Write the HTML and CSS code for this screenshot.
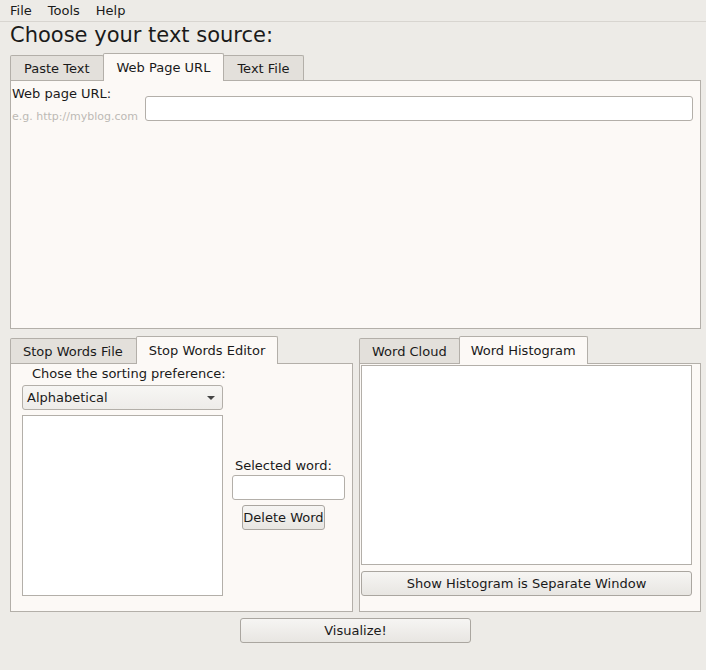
FILE: index.html
```html
<!DOCTYPE html>
<html>
<head>
<meta charset="utf-8">
<link rel="stylesheet" href="styles.css">
</head>
<body>
<div class="menubar">
  <span class="menu">File</span>
  <span class="menu">Tools</span>
  <span class="menu">Help</span>
</div>
<div class="main">
  <h1 class="title">Choose your text source:</h1>

  <div class="notebook top-nb">
    <div class="tabs">
      <div class="tab wide">Paste Text</div>
      <div class="tab wide active">Web Page URL</div>
      <div class="tab wide">Text File</div>
    </div>
    <div class="pane url-pane">
      <div class="url-labels">
        <div class="lbl">Web page URL:</div>
        <div class="hint">e.g. http://myblog.com</div>
      </div>
      <div class="entry url-entry"></div>
    </div>
  </div>

  <div class="lower">
    <div class="notebook left-nb">
      <div class="tabs">
        <div class="tab plus1">Stop Words File</div>
        <div class="tab active">Stop Words Editor</div>
      </div>
      <div class="pane editor-pane">
        <div class="col-left">
          <div class="lbl sort-lbl">Chose the sorting preference:</div>
          <div class="combo"><span>Alphabetical</span><span class="arrow"></span></div>
          <div class="listbox"></div>
        </div>
        <div class="col-right">
          <div class="lbl sel-lbl">Selected word:</div>
          <div class="entry sel-entry"></div>
          <div class="button del-btn">Delete Word</div>
        </div>
      </div>
    </div>
    <div class="notebook right-nb">
      <div class="tabs">
        <div class="tab">Word Cloud</div>
        <div class="tab narrow active">Word Histogram</div>
      </div>
      <div class="pane hist-pane">
        <div class="canvas"></div>
        <div class="button hist-btn">Show Histogram is Separate Window</div>
      </div>
    </div>
  </div>

  <div class="bottom">
    <div class="button vis-btn">Visualize!</div>
  </div>
</div>
</body>
</html>
```

FILE: styles.css
```css
* { box-sizing: border-box; }
html, body {
  margin: 0;
  padding: 0;
  background: #edebe7;
  font-family: "DejaVu Sans", sans-serif;
  font-size: 13px;
  color: #1a1a1a;
  width: 706px;
  height: 670px;
  overflow: hidden;
}
.menubar {
  height: 22px;
  display: flex;
  align-items: center;
  gap: 16px;
  padding-left: 10px;
  border-bottom: 1px solid #d8d5d0;
  background: #edebe7;
}
.menu { line-height: 20px; }
.main {
  padding: 0 5px 0 10px;
}
.title {
  margin: 0;
  font-weight: normal;
  font-size: 21px;
  line-height: 26px;
  height: 31px;
}
.notebook { display: flex; flex-direction: column; }
.tabs {
  display: flex;
  align-items: flex-end;
  height: 27px;
  position: relative;
  z-index: 1;
}
.tab {
  height: 25px;
  line-height: 25px;
  padding: 0 12px;
  background: #e3e0db;
  border: 1px solid #b3afa9;
  border-bottom: none;
  border-radius: 2px 2px 0 0;
  margin-right: -1px;
  white-space: nowrap;
}
.tab.wide { padding: 0 13px; }
.tab.plus1 { padding: 0 13px 0 12px; }
.tab.narrow { padding: 0 11px; }
.tab.active {
  height: 28px;
  line-height: 27px;
  background: #fcf9f6;
  margin-bottom: -1px;
  position: relative;
}
.pane {
  background: #fcf9f6;
  border: 1px solid #b3afa9;
}
.url-pane {
  height: 249px;
  display: flex;
  align-items: flex-start;
  padding: 4px 7px 0 1px;
}
.url-labels { width: 133px; }
.lbl { line-height: 17px; white-space: nowrap; }
.hint {
  font-size: 11px;
  color: #bdbab5;
  margin-top: 8px;
  line-height: 14px;
}
.entry {
  background: #ffffff;
  border: 1px solid #b3afa9;
  border-radius: 3px;
  height: 25px;
}
.url-entry {
  flex: 1;
  margin-top: 11px;
}
.lower {
  display: flex;
  gap: 6px;
  margin-top: 7px;
}
.left-nb { width: 343px; }
.right-nb { width: 342px; }
.editor-pane {
  height: 249px;
  display: flex;
  padding: 1px 0 0 11px;
}
.col-left { width: 201px; display: flex; flex-direction: column; }
.sort-lbl { padding-left: 10px; line-height: 17px; }
.combo {
  margin-top: 3px;
  height: 25px;
  border: 1px solid #b3afa9;
  border-radius: 3px;
  background: linear-gradient(#f7f6f4, #eeece9);
  display: flex;
  align-items: center;
  justify-content: space-between;
  padding: 0 6px 0 4px;
}
.arrow {
  width: 0; height: 0;
  border-left: 4px solid transparent;
  border-right: 4px solid transparent;
  border-top: 4px solid #444;
  margin-right: 1px;
}
.listbox {
  margin-top: 5px;
  height: 181px;
  background: #ffffff;
  border: 1px solid #b3afa9;
}
.col-right {
  flex: 1;
  display: flex;
  flex-direction: column;
  align-items: flex-start;
  padding-top: 92px;
}
.sel-lbl { margin-left: 12px; }
.sel-entry { width: 113px; margin-top: 1px; margin-left: 9px; }
.button {
  height: 25px;
  border: 1px solid #aaa6a0;
  border-radius: 3px;
  background: linear-gradient(#f6f5f3, #e8e6e2);
  display: flex;
  align-items: center;
  justify-content: center;
  white-space: nowrap;
}
.del-btn { width: 83px; margin-top: 5px; margin-left: 19px; }
.hist-pane {
  height: 249px;
  padding: 1px 8px 0 1px;
  display: flex;
  flex-direction: column;
}
.canvas {
  height: 200px;
  background: #ffffff;
  border: 1px solid #b3afa9;
}
.hist-btn { margin-top: 6px; }
.bottom {
  display: flex;
  padding-left: 230px;
  margin-top: 6px;
}
.vis-btn { width: 231px; }
```
